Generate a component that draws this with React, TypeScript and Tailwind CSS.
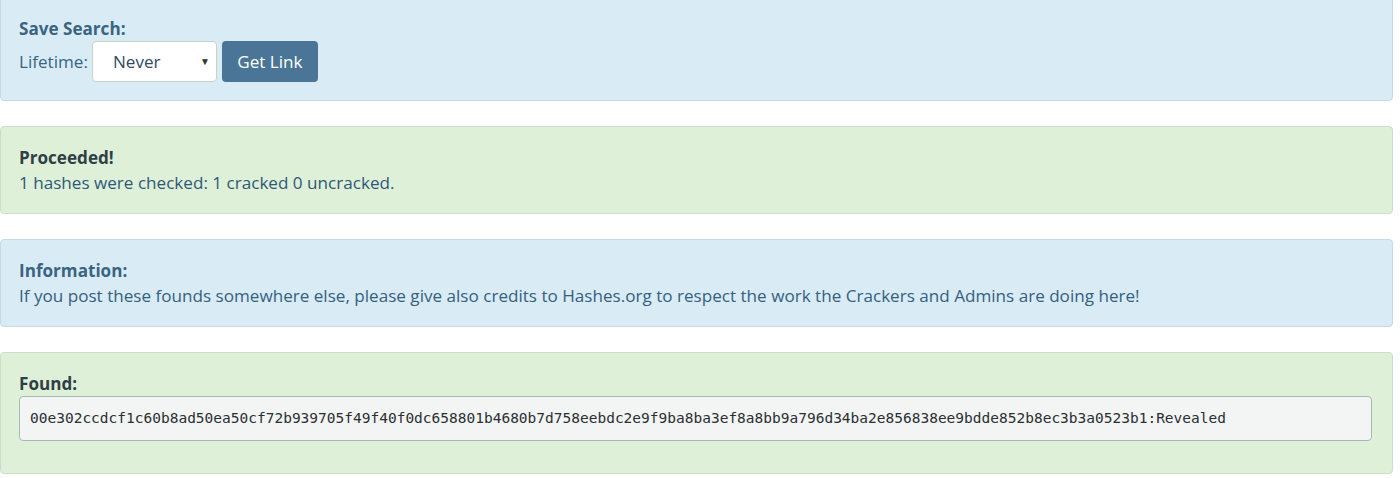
import React from "react";

const font = { fontFamily: '"Open Sans", "Noto Sans", sans-serif' };

export default function App() {
  return (
    <div className="bg-white w-[1400px] h-[478px] overflow-hidden" style={font}>
      <div className="w-[1393px] -mt-[3px] text-[17.1px] leading-[25px]">
        {/* Save search */}
        <div className="mb-[25px] rounded-[4px] border border-[#c2dbe4] bg-[#d9ecf6] p-[18px] text-[#3a6482]">
          <div className="font-bold">Save Search:</div>
          <div className="flex items-center">
            <span className="mr-[4px]">Lifetime:</span>
            <div className="relative flex h-[41px] w-[125px] items-center rounded-[4px] border border-[#c4d4c8] bg-white pl-[20px] text-[#2f4a5e]">
              Never
              <span className="absolute right-[6px] top-[13px] text-[10px] leading-[12px] text-[#333]">▼</span>
            </div>
            <button className="ml-[5px] h-[41px] w-[96px] rounded-[4px] bg-[#4a7596] text-white">
              Get Link
            </button>
          </div>
        </div>

        {/* Proceeded */}
        <div className="mb-[25px] rounded-[4px] border border-[#c9dfcc] bg-[#dff0d8] p-[18px]">
          <div className="font-bold text-[#2f3f47]">Proceeded!</div>
          <div className="text-[#2e5878]">1 hashes were checked: 1 cracked 0 uncracked.</div>
        </div>

        {/* Information */}
        <div className="mb-[25px] rounded-[4px] border border-[#c2dbe4] bg-[#d9ecf6] p-[18px] text-[#35607f]">
          <div className="font-bold text-[#3a6482]">Information:</div>
          <div>
            If you post these founds somewhere else, please give also credits to Hashes.org to respect the work the Crackers and Admins are doing here!
          </div>
        </div>

        {/* Found */}
        <div className="rounded-[4px] border border-[#c9dfcc] bg-[#dff0d8] p-[18px]">
          <div className="font-bold text-[#2f3f47]">Found:</div>
          <div
            className="mb-[14px] flex h-[45px] w-[1353px] items-center rounded-[4px] border border-[#a9b9b9] bg-[#f3f5f4] px-[10px] text-[14.5px] text-[#2a2f33]"
            style={{ fontFamily: '"DejaVu Sans Mono", "Liberation Mono", monospace' }}
          >
            00e302ccdcf1c60b8ad50ea50cf72b939705f49f40f0dc658801b4680b7d758eebdc2e9f9ba8ba3ef8a8bb9a796d34ba2e856838ee9bdde852b8ec3b3a0523b1:Revealed
          </div>
        </div>
      </div>
    </div>
  );
}
